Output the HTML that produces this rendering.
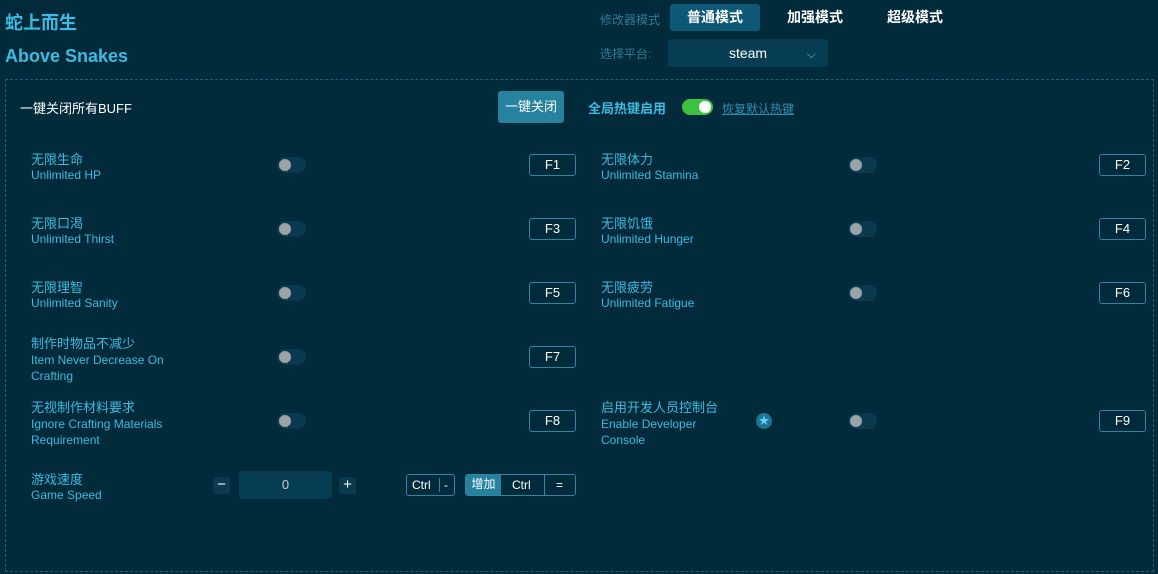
<!DOCTYPE html>
<html><head><meta charset="utf-8"><style>
*{margin:0;padding:0;box-sizing:border-box}
body{width:1158px;height:574px;background:#012a3a;font-family:"Liberation Sans","Noto Sans CJK SC",sans-serif;position:relative;overflow:hidden;color:#3dbbe2}
.a{position:absolute;white-space:nowrap}
.t1{left:5px;top:9px;font-size:18px;font-weight:bold;color:#3dbbe2}
.t2{left:5px;top:46px;font-size:18px;font-weight:bold;color:#3dbbe2}
.box{position:absolute;left:5px;top:79px;width:1149px;height:493px;border:1px dashed #1f5f78}
.cn{font-size:13px;color:#3dbbe2}
.en{font-size:12px;color:#3dbbe2}
.tg{position:absolute;width:29px;height:16px;border-radius:8px;background:#0a3a4e}
.tg::after{content:"";position:absolute;left:2px;top:2px;width:12px;height:12px;border-radius:50%;background:#9aa3a8}
.key{position:absolute;width:47px;height:22px;border:1px solid #2d87a8;border-radius:3px;color:#fff;font-size:13px;text-align:center;line-height:20px}
.mode{position:absolute;top:4px;height:27px;font-size:14px;font-weight:bold;color:#fff;text-align:center;line-height:27px;border-radius:3px}
</style></head><body>
<div class="a t1">蛇上而生</div>
<div class="a t2">Above Snakes</div>
<div class="a" style="left:600px;top:11px;font-size:12px;color:#2f7d96">修改器模式</div>
<div class="mode" style="left:670px;width:90px;background:#0c5876">普通模式</div>
<div class="mode" style="left:770px;width:90px">加强模式</div>
<div class="mode" style="left:870px;width:90px">超级模式</div>
<div class="a" style="left:600px;top:45px;font-size:12px;color:#2f7d96">选择平台:</div>
<div class="a" style="left:668px;top:39px;width:160px;height:28px;background:#073d52;border-radius:3px;color:#fff;font-size:14px;text-align:center;line-height:28px">steam<span style="position:absolute;right:12px;top:1px;color:#9ab;font-size:12px">⌵</span></div>
<div class="box"></div>
<div class="a" style="left:20px;top:98px;font-size:13px;color:#fff">一键关闭所有BUFF</div>
<div class="a" style="left:498px;top:91px;width:66px;height:32px;background:#27829e;border-radius:3px;color:#fff;font-size:13px;text-align:center;line-height:32px">一键关闭</div>
<div class="a" style="left:588px;top:98px;font-size:13px;font-weight:bold">全局热键启用</div>
<div class="a" style="left:682px;top:99px;width:31px;height:16px;border-radius:8px;background:#3ec13e"><div style="position:absolute;right:2px;top:2px;width:12px;height:12px;border-radius:50%;background:#fff"></div></div>
<div class="a" style="left:722px;top:100px;font-size:12px;color:#2f8fb0;text-decoration:underline">恢复默认热键</div>

<div class="a cn" style="left:31px;top:149px">无限生命</div><div class="a en" style="left:31px;top:168px">Unlimited HP</div>
<div class="tg" style="left:277px;top:157px"></div><div class="key" style="left:529px;top:154px">F1</div>
<div class="a cn" style="left:601px;top:149px">无限体力</div><div class="a en" style="left:601px;top:168px">Unlimited Stamina</div>
<div class="tg" style="left:848px;top:157px"></div><div class="key" style="left:1099px;top:154px">F2</div>

<div class="a cn" style="left:31px;top:213px">无限口渴</div><div class="a en" style="left:31px;top:232px">Unlimited Thirst</div>
<div class="tg" style="left:277px;top:221px"></div><div class="key" style="left:529px;top:218px">F3</div>
<div class="a cn" style="left:601px;top:213px">无限饥饿</div><div class="a en" style="left:601px;top:232px">Unlimited Hunger</div>
<div class="tg" style="left:848px;top:221px"></div><div class="key" style="left:1099px;top:218px">F4</div>

<div class="a cn" style="left:31px;top:277px">无限理智</div><div class="a en" style="left:31px;top:296px">Unlimited Sanity</div>
<div class="tg" style="left:277px;top:285px"></div><div class="key" style="left:529px;top:282px">F5</div>
<div class="a cn" style="left:601px;top:277px">无限疲劳</div><div class="a en" style="left:601px;top:296px">Unlimited Fatigue</div>
<div class="tg" style="left:848px;top:285px"></div><div class="key" style="left:1099px;top:282px">F6</div>

<div class="a cn" style="left:31px;top:333px">制作时物品不减少</div><div class="a en" style="left:31px;top:352px;line-height:16px">Item Never Decrease On<br>Crafting</div>
<div class="tg" style="left:277px;top:349px"></div><div class="key" style="left:529px;top:346px">F7</div>

<div class="a cn" style="left:31px;top:397px">无视制作材料要求</div><div class="a en" style="left:31px;top:416px;line-height:16px">Ignore Crafting Materials<br>Requirement</div>
<div class="tg" style="left:277px;top:413px"></div><div class="key" style="left:529px;top:410px">F8</div>
<div class="a cn" style="left:601px;top:397px">启用开发人员控制台</div><div class="a en" style="left:601px;top:416px;line-height:16px">Enable Developer<br>Console</div>
<div class="a" style="left:756px;top:413px;width:16px;height:16px;border-radius:50%;background:#1d7594;color:#5fd0f5;font-size:11px;text-align:center;line-height:16px">★</div>
<div class="tg" style="left:848px;top:413px"></div><div class="key" style="left:1099px;top:410px">F9</div>

<div class="a cn" style="left:31px;top:469px">游戏速度</div><div class="a en" style="left:31px;top:488px">Game Speed</div>
<div class="a" style="left:213px;top:477px;width:17px;height:17px;background:#0a3a4e;border-radius:2px;color:#fff;text-align:center;line-height:16px;font-size:15px">−</div>
<div class="a" style="left:239px;top:471px;width:93px;height:28px;background:#073d52;border-radius:3px;color:#ccc;text-align:center;line-height:28px;font-size:13px">0</div>
<div class="a" style="left:339px;top:477px;width:17px;height:17px;background:#0a3a4e;border-radius:2px;color:#fff;text-align:center;line-height:16px;font-size:15px">+</div>
<div class="a" style="left:406px;top:474px;width:49px;height:22px;border:1px solid #2d87a8;border-radius:3px;color:#fff;font-size:12px;line-height:20px"><span style="position:absolute;left:5px">Ctrl</span><span style="position:absolute;left:32px;top:3px;height:14px;border-left:1px solid #2d87a8"></span><span style="position:absolute;left:37px">-</span></div>
<div class="a" style="left:465px;top:474px;width:111px;height:22px;border:1px solid #2d87a8;border-radius:3px;color:#fff;font-size:12px;line-height:20px;overflow:hidden"><span style="position:absolute;left:0;top:0;width:35px;height:20px;background:#27829e;text-align:center;line-height:18px">增加</span><span style="position:absolute;left:46px">Ctrl</span><span style="position:absolute;left:78px;top:0;height:20px;border-left:1px solid #2d87a8"></span><span style="position:absolute;left:90px">=</span></div>
</body></html>
